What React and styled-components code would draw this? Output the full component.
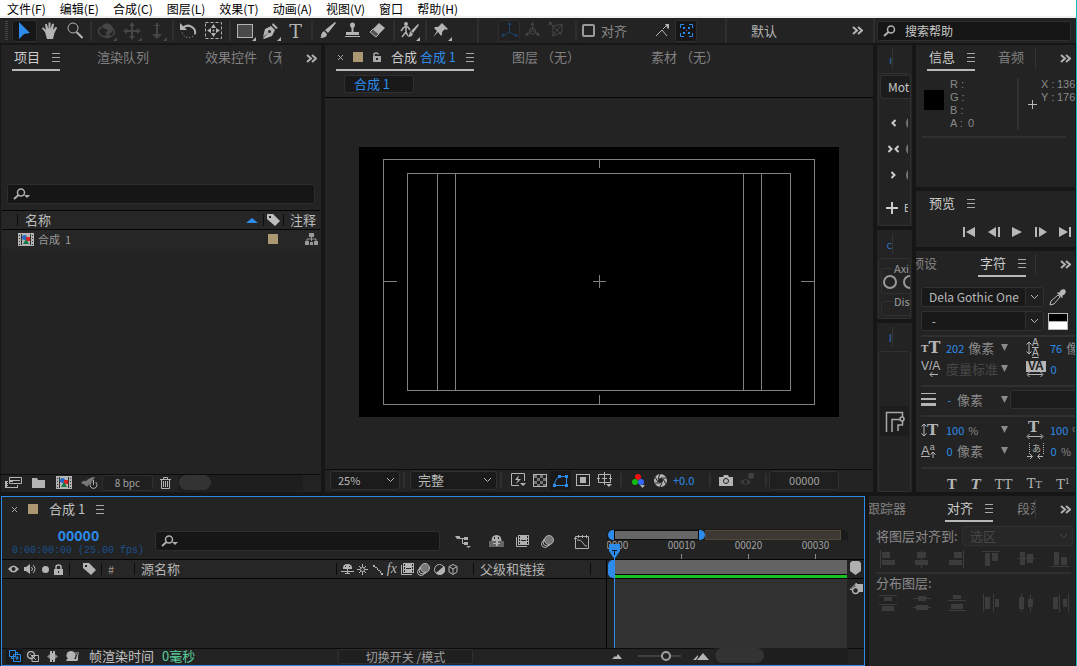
import React, { useState } from 'react'
import styled, { createGlobalStyle, css } from 'styled-components'

const GlobalStyle = createGlobalStyle`
  * {
    box-sizing: border-box;
  }
  body {
    margin: 0;
    background: #161616;
    font-family: "Noto Sans CJK SC", "Noto Sans", sans-serif;
    font-size: 13px;
    line-height: 16px;
    color: #9a9a9a;
  }
  button, input, select {
    font: inherit;
    color: inherit;
    margin: 0;
    padding: 0;
    border: 0;
    background: none;
    outline: none;
  }
  svg {
    display: block;
    flex: none;
  }
`

/* ---------- icons ---------- */

const Icon = ({ w = 16, h = 16, children }) => (
  <svg width={w} height={h} viewBox={`0 0 ${w} ${h}`} fill="currentColor" aria-hidden="true">
    {children}
  </svg>
)

const line = { fill: 'none', stroke: 'currentColor', strokeWidth: 1 }
const line2 = { fill: 'none', stroke: 'currentColor', strokeWidth: 2 }

const Corner = () => <path d="M20 16v4h-4z" />

const ArrowIcon = () => <Icon w={11} h={17}><path d="M0 0l11 11-6 1-5 5z" /></Icon>
const HandIcon = () => (
  <Icon w={17} h={17}>
    <path d="M4 10L1 6.500q0-1.500 1.500-1L5 8 4 2.500Q5 1 6 2.500L7.500 7V1Q8.500-.500 9.500 1v6l1.500-5q1.500-1 2 .500L12 8l2.500-3q1.500-.500 1.500 1L13.500 11 12 17H6z" />
  </Icon>
)
const ZoomIcon = () => (
  <Icon w={16} h={17}><circle cx="6" cy="6" r="5" {...line} /><path d="M9.500 10l6 6" {...line2} /></Icon>
)
const OrbitIcon = () => (
  <Icon w={20} h={20}>
    <path d="M5 5q4-5 9-1 4 4 0 8-3 2-6 0l3-3-5-2z" />
    <path d="M5 6q-5 2-3 6t8 4M15 7q4 4 1 7t-7 2" {...line} strokeWidth="1.500" />
    <path d="M8 14l5-1-1 5z" />
    <Corner />
  </Icon>
)
const MoveIcon = () => (
  <Icon w={20} h={20}>
    <path d="M9 4h2v5h5v2h-5v5H9v-5H4V9h5z" />
    <path d="M10 1l3 4H7zM10 19l3-4H7zM1 10l4-3v6zM19 10l-4-3v6z" />
    <Corner />
  </Icon>
)
const DollyIcon = () => (
  <Icon w={20} h={20}><path d="M9 2h2v11h4l-5 5-5-5h4z" /><path d="M7 4h6v1H7z" /><Corner /></Icon>
)
const RotateIcon = () => (
  <Icon w={17} h={17}>
    <path d="M3 6a7 7 0 0 1 12 6" fill="none" stroke="currentColor" strokeWidth="2" />
    <path d="M0 1v7h7z" />
    <path d="M15 12a7 7 0 0 1-13-2" {...line} strokeDasharray="1 2" />
  </Icon>
)
const AnchorIcon = () => (
  <Icon w={17} h={17}>
    <rect x=".500" y=".500" width="16" height="16" {...line} strokeDasharray="3 2" />
    <path d="M8.500 2l2.500 4H6zM8.500 15l2.500-4H6zM2 8.500L6 6v5zM15 8.500L11 6v5z" />
    <circle cx="8.500" cy="8.500" r="1" />
  </Icon>
)
const RectIcon = () => (
  <Icon w={20} h={20}>
    <rect x="1.500" y="3.500" width="15" height="13" fill="#4a4a4a" stroke="currentColor" /><Corner />
  </Icon>
)
const PenIcon = () => (
  <Icon w={20} h={20}>
    <path d="M12 2l5 5-2 1-4-4zM10 5l4 4-3 6-8 3-1-1 5-5 1-1-6 5 2-8z" />
    <circle cx="8.500" cy="10.500" r="1.500" fill="#232323" /><Corner />
  </Icon>
)
const BrushIcon = () => (
  <Icon w={17} h={17}><path d="M16 0l1 1-8 10-3-3zM5 9l3 3q0 4-7 4 2-1 1-3 1-3 3-4z" /></Icon>
)
const StampIcon = () => (
  <Icon w={17} h={17}>
    <path d="M6 3a2.500 2.500 0 0 1 5 0q0 2-1.500 3v4H15v3H2v-3h5.500V6Q6 5 6 3zM1 14h15v1H1z" />
  </Icon>
)
const EraserIcon = () => (
  <Icon w={17} h={17}>
    <path d="M10 1l6 5-9 9-6-5z" /><path d="M1 10l6 5 3-3-6-5z" fill="#555" stroke="currentColor" />
  </Icon>
)
const RotoIcon = () => (
  <Icon w={20} h={20}>
    <circle cx="6" cy="3" r="2" />
    <path d="M4 6h4l2 3M6 5v6l-4 5M6 11l2 4M4 6L1 10" fill="none" stroke="currentColor" strokeWidth="1.500" />
    <path d="M18 3l1 1-6 8-2-2zM10 10l3 3q-1 3-5 3 2-3 2-6z" /><Corner />
  </Icon>
)
const PinIcon = () => (
  <Icon w={20} h={20}>
    <path d="M10 2l6 6-2 1-1-1-3 3q1 2-1 4L6 11l-5 5 4-6-3-3q2-2 4-1l3-3z" /><Corner />
  </Icon>
)
const AxesIcon = () => (
  <Icon w={17} h={17}>
    <path d="M8.500 1v9L2 14M8.500 10l6.500 4" {...line} /><path d="M8.500 0l2 3h-4zM0 15l2-4 2 3zM17 15l-2-4-2 3z" />
  </Icon>
)
const WorldAxesIcon = () => (
  <Icon w={17} h={17}>
    <circle cx="8.500" cy="9" r="3" {...line} />
    <path d="M8.500 1v7L2 13M8.500 8l6.500 5" {...line} /><path d="M8.500 0l2 3h-4zM1 14l2-4 2 3zM16 14l-2-4-2 3z" />
  </Icon>
)
const ViewAxesIcon = () => (
  <Icon w={17} h={17}>
    <path d="M4 4l9-2v8l-9 4zM1 1l12 12M13 2L3 14" {...line} /><path d="M0 0h4L0 4z" />
  </Icon>
)
const SnapIcon = () => (
  <Icon w={15} h={15}>
    <path d="M1 13l6-6 5 6M8 6l3-3" fill="none" stroke="currentColor" strokeWidth="1" />
    <path d="M10 1h4v4l-1 1z" />
  </Icon>
)
const SnapBoxIcon = () => (
  <Icon w={13} h={13}>
    <path d="M.500 4V.500H4M9 .500h3.500V4M12.500 9v3.500H9M4 12.500H.500V9" {...line} />
    <path d="M3 3h2v2H3zM8 3h2v2H8zM3 8h2v2H3zM8 8h2v2H8zM6 6h1v1H6z" />
  </Icon>
)
const SearchIcon = ({ arrow }) => (
  <Icon w={arrow ? 18 : 14} h={12}>
    <circle cx="8" cy="4.500" r="3.500" {...line} strokeWidth="1.500" />
    <path d="M5.500 7L1 11" {...line} strokeWidth="2" />
    {arrow && <path d="M11 7h6l-3 3z" />}
  </Icon>
)
const MoreIcon = () => (
  <Icon w={11} h={9}><path d="M1 1l4 3.500L1 8M6 1l4 3.500L6 8" fill="none" stroke="currentColor" strokeWidth="2" /></Icon>
)
const MenuIcon = () => <Icon w={8} h={9}><path d="M0 .500h8M0 4.500h8M0 8.500h8" {...line} /></Icon>
const CloseIcon = () => <Icon w={5} h={5}><path d="M0 0l5 5M5 0L0 5" {...line} /></Icon>
const OpenLockIcon = () => (
  <Icon w={8} h={10}><path d="M1 5V2.500Q1 1 3 1t2 1.500" {...line} strokeWidth="1.500" /><path d="M0 4h8v6H0z" /><path d="M3 6h2v2H3z" fill="#232323" /></Icon>
)
const LockIcon = () => (
  <Icon w={9} h={11}><path d="M2 5V3q0-2 2.500-2T7 3v2" {...line} strokeWidth="1.500" /><path d="M0 5h9v6H0z" /><path d="M4 7h1v2H4z" fill="#232323" /></Icon>
)
const TagIcon = () => (
  <Icon w={13} h={12}><path d="M0 0h6l7 7-5 5-8-7z" /><path d="M2 2h2v2H2z" fill="#232323" /></Icon>
)
const FilmIcon = () => (
  <Icon w={16} h={13}>
    <path d="M0 0h16v13H0z" fill="#b4b4b4" />
    <path d="M1 2h1v1H1zM1 5h1v1H1zM1 8h1v1H1zM1 11h1v1H1zM14 2h1v1h-1zM14 5h1v1h-1zM14 8h1v1h-1zM14 11h1v1h-1zM3 1h1v11H3zM12 1h1v11h-1z" fill="#333" />
    <path d="M4 2h8v9H4z" fill="#b4b4b4" />
    <circle cx="6.500" cy="4.500" r="2.500" fill="#2568c4" /><path d="M8 4h4v4H8z" fill="#d22" /><path d="M8 6l3 5H5z" fill="#174" />
  </Icon>
)
const TreeIcon = () => (
  <Icon w={13} h={12}>
    <path d="M4 0h5v4H4zM0 8h4v4H0zM9 8h4v4H9zM5 9h3v3H5z" /><path d="M6.500 4v4M2 8V6h9v2" {...line} />
  </Icon>
)
const FootageIcon = () => (
  <Icon w={17} h={11}>
    <path d="M4.500.500h12v6h-12zM6 3.500h9" {...line} /><path d="M5 3h3v2H5zM0 4h3v1H2v1h1v1H2v1h1v1H2v1h10V8h1v3H0z" />
  </Icon>
)
const FolderIcon = () => <Icon w={13} h={10}><path d="M0 0h5l1 2h7v8H0z" /></Icon>
const RocketIcon = () => (
  <Icon w={17} h={12}>
    <path d="M0 6q2-3 5-2 4-4 9-4-2 4-5 6l-3 4-2-2z" fill="#777" />
    <path d="M10.500 5a3.500 3.500 0 1 0 4 0M12.500 3v5" {...line} />
  </Icon>
)
const TrashIcon = () => (
  <Icon w={11} h={12}><path d="M0 2.500h11M3.500 2V.500h4V2M1.500 3v8.500h8V3M3.500 4v6M5.500 4v6M7.500 4v6" {...line} /></Icon>
)
const ChevronIcon = () => <Icon w={9} h={6}><path d="M1 1l3.500 3.500L8 1" {...line} /></Icon>
const FastPreviewIcon = () => (
  <Icon><path d="M1.500 1.500h13V9M1.500 1.500v12H9" {...line} /><path d="M9 3L5 8h3l-2 4 5-5H8zM10 11h6l-3 3z" /></Icon>
)
const CheckerIcon = () => (
  <Icon w={14} h={13}>
    <rect x=".500" y=".500" width="13" height="12" {...line} />
    <path d="M1 1h3v3H1zM7 1h3v3H7zM4 4h3v3H4zM10 4h3v3h-3zM1 7h3v3H1zM7 7h3v3H7zM4 10h3v2H4zM10 10h3v2h-3z" fill="#777" />
  </Icon>
)
const MaskIcon = () => (
  <Icon w={15} h={13}><path d="M1.500 11.500q0-6 5-9h7v9z" {...line} /><path d="M0 10h3v3H0zM5 1h3v3H5zM12 1h3v3h-3zM12 10h3v3h-3z" /></Icon>
)
const RoiIcon = () => (
  <Icon w={14} h={12}><rect x=".500" y=".500" width="13" height="11" {...line} /><path d="M4 3h6v6H4z" /></Icon>
)
const GridIcon = () => (
  <Icon><path d="M1.500 2.500h12v8h-12zM7.500 0v13M0 6.500h3M12 6.500h3M5 6.500h5" {...line} /><path d="M9 12h6l-3 3z" /></Icon>
)
const RgbIcon = () => (
  <Icon>
    <circle cx="7" cy="5" r="3" fill="#e11" /><circle cx="4" cy="10" r="3" fill="#1b1" /><circle cx="10" cy="10" r="3" fill="#36f" />
    <path d="M9 13h5l-2.500 3z" />
  </Icon>
)
const ApertureIcon = () => (
  <Icon w={13} h={13}>
    <circle cx="6.500" cy="6.500" r="4.500" fill="none" stroke="currentColor" strokeWidth="4" />
    <path d="M6 0L4 5M12 4L7 4M12 10L9 5M6 13l2-4M1 9h5M1 3l3 5" stroke="#232323" />
  </Icon>
)
const CameraIcon = () => (
  <Icon w={14} h={11}><path d="M0 2h4l1-2h4l1 2h4v9H0z" /><circle cx="7" cy="6" r="2.500" fill="none" stroke="#232323" /></Icon>
)
const GhostCameraIcon = () => (
  <Icon><circle cx="11" cy="4" r="3" /><path d="M9 1h5v3h-5z" /><path d="M0 10q5-6 11 0-5 6-11 0z" /><circle cx="5.500" cy="10" r="2" fill="#232323" /></Icon>
)
const FlowIcon = () => (
  <Icon w={17} h={14}><path d="M0 2h5v3H2zM9 3h4v3H9zM9 8h4v3H9z" /><path d="M4 4.500h5M7.500 4v5.500H9" {...line} /><path d="M11 12h5l-2.500 2z" /></Icon>
)
const ShyIcon = () => (
  <Icon w={15} h={12}>
    <path d="M0 6h15v6H0z" fill="#666" /><path d="M2.500 6q0-6 5-6t5 6H9v2h2v1H9v2H7V9H4V8h3V6z" />
    <path d="M5 2h1v2H5zM9 2h1v2H9z" fill="#232323" />
  </Icon>
)
const FrameBlendIcon = () => (
  <Icon w={13} h={12}>
    <path d="M.500 2v9.500H11" {...line} /><path d="M2 0h11v10H2z" />
    <path d="M3 1h1v2H3zM3 4h1v2H3zM3 7h1v2H3zM11 1h1v2h-1zM11 4h1v2h-1zM11 7h1v2h-1zM5 5h5v1H5z" fill="#232323" />
  </Icon>
)
const MotionBlurIcon = () => (
  <Icon w={13} h={13}>
    <circle cx="4" cy="9" r="3.500" {...line} /><circle cx="6" cy="7" r="4" {...line} />
    <circle cx="8" cy="5" r="4.500" fill="#777" stroke="currentColor" />
  </Icon>
)
const GraphIcon = () => (
  <Icon w={16} h={15}><path d="M1.500 2.500h13v12h-13zM0 4.500h3M4.500 1v3M8.500 1v3M12.500 1v3M3 6q4-1 6 3t4 3" {...line} /></Icon>
)
const EyeIcon = () => (
  <Icon w={11} h={8}><path d="M0 4q5.500-7 11 0-5.500 7-11 0z" /><circle cx="5.500" cy="4" r="2" fill="#232323" /></Icon>
)
const SpeakerIcon = () => (
  <Icon w={12} h={10}><path d="M0 3h2l4-3v10L2 7H0z" /><path d="M7.500 3q2 2 0 4M9 1q4 4 0 8" {...line} /></Icon>
)
const DotIcon = () => <Icon w={7} h={7}><circle cx="3.500" cy="3.500" r="3.500" /></Icon>
const ShySwitchIcon = () => (
  <Icon w={13} h={11}><path d="M2 4q0-4 4.500-4T11 4v1H2z" /><path d="M0 7.500h13M6.500 4v6M4 9.500h5" {...line} /><path d="M4 2h1v1H4zM8 2h1v1H8z" fill="#232323" /></Icon>
)
const SunIcon = () => (
  <Icon w={11} h={11}><circle cx="5.500" cy="5.500" r="2" {...line} /><path d="M5.500 0v3M5.500 8v3M0 5.500h3M8 5.500h3M2 2l2 2M7 7l2 2M9 2L7 4M4 7L2 9" {...line} /></Icon>
)
const QualityIcon = () => <Icon w={11} h={11}><path d="M1 1h2v2H1zM3 3h2v1H3zM5 4h1v2H5zM6 6h2v1H6zM8 7h1v2H8zM9 9h2v2H9z" /></Icon>
const HalfIcon = () => (
  <Icon w={11} h={11}><circle cx="5.500" cy="5.500" r="5" {...line} /><path d="M10 2A5 5 0 1 1 2 9z" /></Icon>
)
const CubeIcon = () => (
  <Icon w={10} h={11}><path d="M5 .500l4 2v5.500l-4 2.500L1 8V2.500zM1 2.500l4 2.500 4-2.500M5 5v5" {...line} /></Icon>
)
const LayersIcon = () => (
  <Icon w={12} h={12}><path d="M.500.500h6v6h-6zM2.500 6.500v2h2M6.500 2.500h2v2M4.500 4.500h7v7h-7zM8 6v4M6 8h4" {...line} /></Icon>
)
const OverlapIcon = () => (
  <Icon w={12} h={11}><circle cx="4" cy="4" r="3.500" {...line} strokeWidth="1.500" /><path d="M5 4.500h6.500v6H5zM3 3l6 6" {...line} /></Icon>
)
const FrameIcon = () => (
  <Icon w={11} h={11}><path d="M3 0h2v2h1V0h2v11H6V9H5v2H3z" /><path d="M3 3v5L0 5.500zM8 3v5l3-2.500z" fill="#888" /></Icon>
)
const SnailIcon = () => (
  <Icon w={13} h={10}><circle cx="5" cy="4.500" r="4.500" /><path d="M1 8h9l1-4h1v5l-1 1H0z" /><path d="M10 1v3M12 1v3" {...line} /></Icon>
)
const SmallHillIcon = () => <Icon w={10} h={5}><path d="M0 5l3-3 1 1 2-3 4 5z" /></Icon>
const BigHillIcon = () => <Icon w={16} h={7}><path d="M0 7l5-5v2L3 7zM4 7l6-7 6 7z" /></Icon>
const ShieldIcon = () => <Icon w={11} h={14}><path d="M0 2l2-2h7l2 2v8l-5.500 4L0 10z" /></Icon>
const CompButtonIcon = () => (
  <Icon w={14} h={13}><path d="M7 2h7v8H7z" /><path d="M1 7.500h4L7.500 1v5" {...line} /><path d="M1 7.500L7.500 1" {...line} /><circle cx="6.500" cy="8.500" r="3" fill="#232323" stroke="currentColor" strokeWidth="1.500" /></Icon>
)
const PlayheadIcon = () => (
  <Icon w={13} h={15}><path d="M1 0h11v7l-5.500 8L1 7z" /><path d="M4 6h5v1H7v4H6V7H4z" fill="#111" /></Icon>
)
const DropperIcon = () => (
  <Icon w={17} h={17}><path d="M12 1l3-1 2 2-1 3-3 2 1 1-1 1-5-5 1-1 1 1z" /><path d="M9 6l2 2-6 7-4 1 1-4z" {...line} /></Icon>
)
const PlusIcon = ({ size = 11, weight = 1 }) => (
  <Icon w={size} h={size}><path d={`M0 ${size / 2}h${size}M${size / 2} 0v${size}`} stroke="currentColor" strokeWidth={weight} /></Icon>
)
const EaseLeft = () => <Icon w={5} h={8}><path d="M4.500 1L1.500 4l3 3" {...line2} /></Icon>
const EaseRight = () => <Icon w={5} h={8}><path d="M.500 1l3 3-3 3" {...line2} /></Icon>
const PathIcon = () => (
  <Icon w={20} h={21}><path d="M1.500 21V1.500h16V6M7 21V8.500h9M13 20v-6h4.500V9" {...line} strokeWidth="1.500" /><circle cx="17" cy="8" r="2" fill="#232323" stroke="currentColor" strokeWidth="1.500" /></Icon>
)

const TransportIcons = {
  first: <Icon w={12} h={10}><path d="M0 0h2v10H0zM12 0v10L3 5z" /></Icon>,
  back: <Icon w={12} h={10}><path d="M8 0v10L0 5zM10 0h2v10h-2z" /></Icon>,
  play: <Icon w={10} h={10}><path d="M0 0l10 5-10 5z" /></Icon>,
  next: <Icon w={12} h={10}><path d="M0 0h2v10H0zM4 0l8 5-8 5z" /></Icon>,
  last: <Icon w={12} h={10}><path d="M0 0l9 5-9 5zM10 0h2v10h-2z" /></Icon>,
}

/* rect shapes and guide lines of the align panel */
const alignIcons = [
  ['左对齐', 'M1 0h1v18H1zM3 2h8v6H3zM3 10h13v5H3z'],
  ['水平居中', 'M8 0h1v18H8zM4 2h9v6H4zM2 10h13v5H2z'],
  ['右对齐', 'M15 0h1v18h-1zM6 2h8v6H6zM1 10h13v5H1z'],
  ['顶对齐', 'M0 1h18v1H0zM3 3h5v13H3zM10 3h6v8h-6z'],
  ['垂直居中', 'M0 8h18v1H0zM3 2h5v13H3zM10 4h6v9h-6z'],
  ['底对齐', 'M0 16h18v1H0zM3 2h5v13H3zM10 7h6v8h-6z'],
]
const distributeIcons = [
  ['按顶分布', 'M0 1h18v1H0zM5 3h8v4H5zM0 10h18v1H0zM3 12h12v5H3z'],
  ['垂直均匀分布', 'M0 4h18v1H0zM5 2h8v5H5zM0 13h18v1H0zM3 11h12v5H3z'],
  ['按底分布', 'M5 1h8v4H5zM0 6h18v1H0zM3 10h12v5H3zM0 16h18v1H0z'],
  ['按左分布', 'M1 0h1v18H1zM3 3h5v12H3zM11 0h1v18h-1zM13 5h4v8h-4z'],
  ['水平均匀分布', 'M4 0h1v18H4zM2 3h5v12H2zM13 0h1v18h-1zM11 5h5v8h-5z'],
  ['按右分布', 'M2 3h5v12H2zM8 0h1v18H8zM12 5h4v8h-4zM17 0h1v18h-1z'],
]

/* ---------- shared parts ---------- */

const Window = styled.div`
  display: flex;
  flex-direction: column;
  min-height: 100vh;
  border-right: 1px solid #17b9b9;
  background: #161616;
  overflow: hidden;
`

const MenuBar = styled.nav`
  display: flex;
  gap: 14px;
  height: 18px;
  padding-left: 7px;
  background: #fff;
  border-bottom: 2px solid #f0f0f0;
  color: #000;
  font-size: 12px;
  line-height: 15px;
  button {
    white-space: nowrap;
  }
`

const Toolbar = styled.div`
  display: flex;
  align-items: center;
  height: 25px;
  margin-bottom: 2px;
  padding: 0 5px;
  background: #232323;
  color: #b4b4b4;
`

const Grip = styled.div`
  width: 3px;
  height: 19px;
  margin-right: 4px;
  background: repeating-linear-gradient(#444 0 1px, #232323 1px 2px);
`

const ToolButton = styled.button`
  display: flex;
  align-items: center;
  justify-content: center;
  flex: none;
  width: ${({ $w }) => $w || 25}px;
  height: 22px;
  border-radius: 3px;
  ${({ $on }) => $on && css`
    background: #161616;
    border: 1px solid #2e2e2e;
    color: #2d8ceb;
  `}
  ${({ $dim }) => $dim && css`
    color: #464646;
  `}
  ${({ $on, $dim }) => $on && $dim && css`
    background: #202020;
    color: #1c426b;
  `}
`

const TypeGlyph = styled.span`
  font-family: "DejaVu Serif", serif;
  font-size: ${({ $size }) => $size || 13}px;
  font-weight: ${({ $bold }) => ($bold ? 700 : 400)};
  font-style: ${({ $italic }) => ($italic ? 'italic' : 'normal')};
  line-height: 16px;
  small {
    font-size: 10px;
  }
  sup {
    font-size: 8px;
    line-height: 0;
  }
`

const Divider = styled.span`
  flex: none;
  width: 2px;
  height: ${({ $h }) => $h || 20}px;
  margin: 0 2px 0 3px;
  background: #2f2f2f;
`

const Spacer = styled.div`
  flex: ${({ $w }) => ($w ? `0 0 ${$w}px` : '1')};
`

const CheckLabel = styled.label`
  display: flex;
  align-items: center;
  gap: 6px;
  margin-left: 3px;
  color: #8a8a8a;
  input {
    appearance: none;
    width: 13px;
    height: 13px;
    border: 2px solid #9a9a9a;
    border-radius: 2px;
  }
`

const SearchBox = styled.label`
  display: flex;
  align-items: center;
  gap: 8px;
  flex: ${({ $w }) => ($w ? `0 0 ${$w}px` : '1')};
  height: 20px;
  padding-left: 5px;
  border: 1px solid #2e2e2e;
  border-radius: 3px;
  background: #161616;
  color: #b0b0b0;
  font-size: 12px;
  input {
    flex: 1;
    min-width: 0;
  }
  input::placeholder {
    color: #c8c8c8;
    opacity: 1;
  }
`

const Panel = styled.section`
  display: flex;
  flex-direction: column;
  flex: ${({ $flex }) => $flex || 'none'};
  min-width: 0;
  min-height: ${({ $h }) => ($h ? `${$h}px` : 'auto')};
  background: #232323;
  overflow: hidden;
`

const TabBar = styled.div`
  display: flex;
  flex: none;
  align-items: stretch;
  height: 26px;
  padding-left: ${({ $pad }) => $pad ?? 11}px;
`

const TabClip = styled.div`
  display: flex;
  flex: 1;
  min-width: 0;
  overflow: hidden;
`

const Tab = styled.button`
  display: flex;
  align-items: center;
  flex: none;
  gap: ${({ $gap }) => $gap || 12}px;
  height: 26px;
  margin-left: ${({ $before }) => $before || 0}px;
  padding: 0 0 0 2px;
  border-bottom: 2px solid ${({ $active }) => ($active ? '#b9b9b9' : 'transparent')};
  color: ${({ $active, $bright }) => ($active || $bright ? '#cdcdcd' : '#808080')};
  white-space: nowrap;
  svg {
    color: #a8a8a8;
  }
`

const TabEnd = styled.div`
  display: flex;
  align-items: center;
  gap: 24px;
  width: 40px;
  color: #b0b0b0;
  &::before {
    content: '';
    width: 1px;
    height: 20px;
    background: #343434;
  }
`

const Blue = styled.span`
  color: #2d8ceb;
`

const Swatch = styled.span`
  flex: none;
  width: 10px;
  height: 10px;
  background: #ab9873;
`

const SelectWrap = styled.div`
  display: grid;
  flex: none;
  align-items: center;
  width: ${({ $w }) => $w}px;
  height: ${({ $h }) => $h || 20}px;
  border: 1px solid #303030;
  border-radius: 3px;
  background: ${({ $bg }) => $bg || '#1b1b1b'};
  color: ${({ $dim }) => ($dim ? '#484848' : '#b8b8b8')};
  select, svg {
    grid-area: 1 / 1;
  }
  select {
    appearance: none;
    width: 100%;
    height: 100%;
    padding-left: 7px;
    opacity: 1;
    font-size: ${({ $size }) => $size || 12}px;
  }
  svg {
    justify-self: end;
    margin-right: 4px;
    pointer-events: none;
  }
`

const Select = ({ label, value, ...rest }) => (
  <SelectWrap {...rest}>
    <select aria-label={label} disabled={rest.$dim} defaultValue={value}>
      <option>{value}</option>
    </select>
    <ChevronIcon />
  </SelectWrap>
)

const Workspace = styled.main`
  display: flex;
  flex: 1;
  gap: 4px;
  padding: 0 1px;
`

const BottomRow = styled.div`
  display: flex;
  gap: 4px;
  min-height: 170px;
  margin-top: 4px;
  padding: 0 1px;
`

const Column = styled.div`
  display: flex;
  flex-direction: column;
  flex: 0 0 ${({ $w }) => $w}px;
  gap: 4px;
  min-width: 0;
`

/* ---------- project ---------- */

const ProjectSearch = styled.div`
  display: flex;
  margin: 113px 6px 6px 6px;
`

const ItemTable = styled.table`
  width: calc(100% - 2px);
  margin-left: 1px;
  border-collapse: collapse;
  table-layout: fixed;
  th, td {
    height: 19px;
    padding: 0;
    font-weight: 400;
    text-align: left;
  }
  thead tr {
    border-top: 1px solid #050505;
    border-bottom: 1px solid #050505;
    background: #262626;
    color: #bdbdbd;
  }
  tbody tr {
    background: #262626;
    color: #9a9a9a;
    font-size: 11px;
  }
`

const CellFlex = styled.div`
  display: flex;
  align-items: center;
  gap: 4px;
  height: 12px;
  padding-left: ${({ $pad }) => $pad || 0}px;
  border-left: ${({ $line }) => ($line ? '1px solid #0c0c0c' : '0')};
  white-space: nowrap;
`

const SortMark = styled.span`
  margin-left: auto;
  margin-right: 5px;
  border: 6px solid transparent;
  border-top: 0;
  border-bottom: 5px solid #2d8ceb;
`

const PanelFooter = styled.div`
  display: flex;
  align-items: center;
  height: ${({ $h }) => $h || 18}px;
  margin-top: auto;
  padding-bottom: 2px;
  border-top: 1px solid #0c0c0c;
  color: #b4b4b4;
`

const IconButton = styled.button`
  display: flex;
  align-items: center;
  justify-content: center;
  flex: none;
  width: ${({ $w }) => $w || 25}px;
  height: ${({ $h }) => $h || 16}px;
  color: ${({ $on, $dim }) => ($on ? '#2d8ceb' : $dim ? '#3e3e3e' : 'inherit')};
  background: ${({ $on }) => ($on ? '#191919' : 'none')};
`

const BoxButton = styled.button`
  flex: none;
  width: ${({ $w }) => $w}px;
  height: ${({ $h }) => $h || 16}px;
  border: 1px solid #303030;
  border-radius: 3px;
  background: #1f1f1f;
  color: #a0a0a0;
  font-size: ${({ $size }) => $size || 11}px;
  line-height: 13px;
`

const ScrollTrack = styled.div`
  flex: 0 0 ${({ $w }) => $w}px;
  height: 16px;
  margin-left: ${({ $ml }) => $ml || 0}px;
  background: #1e1e1e;
  &::before {
    content: '';
    display: block;
    width: ${({ $thumb }) => $thumb}px;
    height: 15px;
    margin-left: 1px;
    border-radius: 8px;
    background: #333;
  }
`

const Project = () => (
  <Panel $flex="0 0 320px">
    <TabBar>
      <TabClip>
        <Tab $active>项目 <MenuIcon /></Tab>
        <Tab $before={35}>渲染队列</Tab>
        <Tab $before={54}>效果控件 （无）</Tab>
      </TabClip>
      <TabEnd><MoreIcon /></TabEnd>
    </TabBar>
    <ProjectSearch>
      <SearchBox><SearchIcon arrow /><input aria-label="搜索项目" /></SearchBox>
    </ProjectSearch>
    <ItemTable>
      <colgroup><col width="15" /><col /><col width="20" /><col width="37" /></colgroup>
      <thead>
        <tr>
          <th />
          <th><CellFlex $line $pad={7}>名称<SortMark /></CellFlex></th>
          <th><CellFlex $line $pad={3}><TagIcon /></CellFlex></th>
          <th><CellFlex $line $pad={6}>注释</CellFlex></th>
        </tr>
      </thead>
      <tbody>
        <tr>
          <td colSpan={2}><CellFlex $pad={16}><FilmIcon />合成&nbsp; 1</CellFlex></td>
          <td><CellFlex $pad={5}><Swatch /></CellFlex></td>
          <td><CellFlex $pad={22}><TreeIcon /></CellFlex></td>
        </tr>
      </tbody>
    </ItemTable>
    <PanelFooter>
      <IconButton><FootageIcon /></IconButton>
      <IconButton><FolderIcon /></IconButton>
      <IconButton><FilmIcon /></IconButton>
      <IconButton $w={26}><RocketIcon /></IconButton>
      <BoxButton $w={51} $size={10}>8 bpc</BoxButton>
      <IconButton $w={24}><TrashIcon /></IconButton>
      <ScrollTrack $w={125} $thumb={32} $ml={1} />
    </PanelFooter>
  </Panel>
)

/* ---------- composition ---------- */

const Crumbs = styled.div`
  display: flex;
  align-items: center;
  height: 27px;
  padding: 0 0 0 19px;
  border-bottom: 1px solid #050505;
  color: #2d8ceb;
  button {
    width: 70px;
    height: 18px;
    padding-right: 14px;
    border: 1px solid #303030;
    border-radius: 3px;
    background: #191919;
    line-height: 14px;
  }
`

const Viewer = styled.div`
  display: flex;
  flex: 1;
  align-items: center;
  justify-content: center;
  padding-bottom: 3px;
`

const Canvas = styled.div`
  width: 480px;
  max-width: 100%;
  aspect-ratio: 16 / 9;
  background: #000;
  color: #808080;
  svg {
    width: 100%;
    height: 100%;
  }
`

const ExposureValue = styled.button`
  padding: 0 3px 0 4px;
  color: #2d8ceb;
  font-size: 11px;
`

const Composition = () => (
  <Panel $flex="1">
    <TabBar>
      <Tab $active $gap={10}>
        <CloseIcon /><Swatch /><OpenLockIcon />
        <span>合成 <Blue>合成 1</Blue></span><MenuIcon />
      </Tab>
      <Tab $before={36}>图层 （无）</Tab>
      <Tab $before={69}>素材 （无）</Tab>
    </TabBar>
    <Crumbs><button>合成 1</button></Crumbs>
    <Viewer>
      <Canvas>
        <svg viewBox="0 0 480 270" fill="none" stroke="currentColor">
          <rect x="24.500" y="12.500" width="431" height="245" />
          <rect x="48.500" y="26.500" width="383" height="217" />
          <path d="M78.500 26v218M96.500 26v218M384.500 26v218M402.500 26v218" />
          <path d="M240.500 12v9M240.500 248v9M25 134.500h13M442 134.500h13M234 134.500h13M240.500 128v13" />
        </svg>
      </Canvas>
    </Viewer>
    <PanelFooter $h={23}>
      <Spacer $w={5} />
      <Select label="放大率" value="25%" $w={70} $h={19} $size={11} />
      <Divider $h={16} />
      <Spacer $w={3} />
      <Select label="分辨率" value="完整" $w={87} $h={19} $size={13} />
      <Divider $h={16} />
      <Spacer $w={2} />
      <IconButton $w={23} $h={19}><FastPreviewIcon /></IconButton>
      <IconButton $w={21} $h={19}><CheckerIcon /></IconButton>
      <IconButton $w={21} $h={19} $on><MaskIcon /></IconButton>
      <IconButton $w={23} $h={19}><RoiIcon /></IconButton>
      <IconButton $w={21} $h={19}><GridIcon /></IconButton>
      <Spacer $w={2} />
      <Divider $h={14} />
      <Spacer $w={3} />
      <IconButton $w={24} $h={19}><RgbIcon /></IconButton>
      <IconButton $w={18} $h={19}><ApertureIcon /></IconButton>
      <ExposureValue>+0.0</ExposureValue>
      <Spacer $w={9} />
      <Divider $h={14} />
      <Spacer $w={1} />
      <IconButton $w={23} $h={19}><CameraIcon /></IconButton>
      <IconButton $w={21} $h={19} $dim><GhostCameraIcon /></IconButton>
      <Spacer $w={4} />
      <Divider $h={14} />
      <BoxButton $w={70} $h={19}>00000</BoxButton>
    </PanelFooter>
  </Panel>
)

/* ---------- narrow script panels ---------- */

const ScriptTab = styled.div`
  display: flex;
  align-items: center;
  justify-content: flex-end;
  flex: none;
  width: 16px;
  height: 20px;
  margin: 4px 0;
  border-right: 1px solid #343434;
  color: #2d6fbf;
  font-size: 11px;
  overflow: hidden;
`

const ScriptBody = styled.div`
  display: flex;
  flex-direction: column;
  flex: 1;
  margin: 0 1px;
  padding: 1px 2px 0 1px;
  border: 1px solid #303030;
  border-radius: 3px;
  overflow: hidden;
`

const ScriptButton = styled.button`
  flex: none;
  width: 60px;
  height: 24px;
  margin-bottom: 11px;
  padding-left: 7px;
  border: 1px solid #303030;
  border-radius: 3px;
  background: #1c1c1c;
  color: #c4c4c4;
  font-size: 12px;
  text-align: left;
`

const EaseRow = styled.div`
  display: flex;
  align-items: center;
  justify-content: center;
  flex: none;
  height: 26px;
  color: #ccc;
  overflow: hidden;
  input {
    flex: none;
    appearance: none;
    width: 14px;
    height: 14px;
    margin-right: -12px;
    border: 2px solid #777;
    border-radius: 50%;
  }
  span {
    display: flex;
    flex: 1;
    justify-content: center;
    gap: 1px;
  }
  small {
    margin-right: -2px;
    font-size: 10px;
  }
`

const ScriptGroup = styled.fieldset`
  flex: none;
  width: 50px;
  min-width: 0;
  height: ${({ $h }) => $h}px;
  margin: 0 0 0 1px;
  padding: 0;
  border: 1px solid #303030;
  border-right: 0;
  border-radius: 3px;
  font-size: 11px;
  line-height: 14px;
  legend {
    margin-left: 10px;
    padding: 0 2px;
  }
  div {
    display: flex;
    gap: 6px;
    padding-left: 1px;
  }
  input {
    appearance: none;
    width: 14px;
    height: 14px;
    border: 2px solid #999;
    border-radius: 50%;
  }
`

const AnchorBox = styled.button`
  display: flex;
  align-items: center;
  justify-content: center;
  width: 29px;
  height: 30px;
  margin-top: 53px;
  background: #1d1d1d;
  color: #a8a8a8;
`

const Scripts = () => (
  <Column $w={35}>
    <Panel $h={181}>
      <ScriptTab>ı</ScriptTab>
      <ScriptBody>
        <ScriptButton>Motion</ScriptButton>
        <EaseRow><span><EaseLeft /></span><input type="radio" aria-label="缓入" /></EaseRow>
        <EaseRow><span><EaseRight /><EaseLeft /></span><input type="radio" aria-label="缓动" /></EaseRow>
        <EaseRow><span><EaseRight /></span><input type="radio" aria-label="缓出" /></EaseRow>
        <Spacer $w={7} />
        <EaseRow><span><PlusIcon size={12} weight={2} /></span><small>E</small></EaseRow>
      </ScriptBody>
    </Panel>
    <Panel $h={89}>
      <ScriptTab>c</ScriptTab>
      <ScriptBody>
        <Spacer $w={1} />
        <ScriptGroup $h={33}>
          <legend>Axis</legend>
          <div><input type="radio" name="axis" aria-label="X" /><input type="radio" name="axis" aria-label="Y" /></div>
        </ScriptGroup>
        <ScriptGroup $h={22}><legend>Distance</legend></ScriptGroup>
      </ScriptBody>
    </Panel>
    <Panel $flex="1">
      <ScriptTab>I</ScriptTab>
      <ScriptBody><AnchorBox aria-label="路径"><PathIcon /></AnchorBox></ScriptBody>
    </Panel>
  </Column>
)

/* ---------- info, preview, character ---------- */

const InfoBody = styled.div`
  display: grid;
  grid-template-columns: 20px 66px 27px 1fr;
  margin: 7px 9px 0 6px;
  padding: 0 0 6px 2px;
  border-bottom: 2px solid #303030;
  font-family: "Liberation Sans", sans-serif;
  font-size: 11px;
  line-height: 13px;
  color: #8a8a8a;
`

const ColorChip = styled.div`
  height: 20px;
  margin-top: 12px;
  background: #000;
`

const Channels = styled.dl`
  display: grid;
  grid-template-columns: ${({ $term }) => $term || 18}px 1fr;
  align-content: start;
  margin: 0;
  padding-left: ${({ $pad }) => $pad || 0}px;
  white-space: pre;
  dt, dd {
    margin: 0;
    min-height: 13px;
  }
`

const CrossCell = styled.div`
  display: flex;
  align-items: center;
  justify-content: flex-end;
  height: 52px;
  margin-left: 7px;
  border-left: 2px solid #303030;
  color: #b8b8b8;
`

const Transport = styled.div`
  display: flex;
  justify-content: space-between;
  padding: 10px 4px 0 47px;
  color: #b8b8b8;
`

const CharBody = styled.div`
  display: flex;
  flex-direction: column;
  padding: 10px 0 0 5px;
`

const FontPicker = styled.div`
  display: grid;
  grid-template-columns: 123px 1fr;
  gap: 4px;
  align-items: center;
  padding-bottom: 4px;
  color: #b8b8b8;
  svg {
    margin-left: 1px;
  }
`

const FontSelect = styled(SelectWrap)`
  background: linear-gradient(to left, #1f1f1f 17px, #303030 17px 18px, #191919 18px);
`

const FillStroke = styled.button`
  width: 20px;
  height: 17px;
  border: 1px solid #b8b8b8;
  background: linear-gradient(#000 0 7px, #aaa 7px 8px, #fff 8px);
`

const MetricGroup = styled.div`
  padding: ${({ $top }) => $top}px 0 ${({ $bottom }) => $bottom}px;
  border-top: 2px solid #303030;
`

const MetricRow = styled.div`
  display: grid;
  grid-template-columns: 25px 55px 25px 24px 1fr;
  align-items: center;
  height: 21px;
  white-space: nowrap;
  color: #b4b4b4;
`

const Metric = styled.div`
  display: flex;
  align-items: center;
  gap: 4px;
  color: ${({ $dim }) => ($dim ? '#484848' : '#8a8a8a')};
  button {
    min-width: 7px;
    color: #2d8ceb;
    font-size: 11px;
    line-height: 16px;
  }
`

const DownArrow = styled.span`
  width: 7px;
  height: 7px;
  background: #8a8a8a;
  clip-path: polygon(0 0, 100% 0, 50% 100%);
`

const StrokeStyle = styled.input`
  grid-column: span 2;
  width: 90px;
  height: 19px;
  margin-left: -16px;
  border: 1px solid #303030;
  border-radius: 3px;
  background: #1b1b1b;
`

const StyleButtons = styled.div`
  display: flex;
  align-items: center;
  justify-content: space-between;
  height: 25px;
  padding: 7px 5px 0 26px;
  border-top: 2px solid #303030;
  color: #b4b4b4;
`

const CharIcon = styled.span`
  display: flex;
  align-items: center;
  font-family: ${({ $serif }) => ($serif ? '"DejaVu Serif", serif' : '"Liberation Sans", sans-serif')};
  font-size: ${({ $size }) => $size || 12}px;
  font-weight: ${({ $serif }) => ($serif ? 700 : 400)};
  line-height: 14px;
  small {
    align-self: flex-end;
    font-size: 10px;
    line-height: 12px;
  }
`

const Stacked = styled(CharIcon)`
  flex-direction: column;
  align-items: flex-start;
  line-height: ${({ $lh }) => $lh || 11}px;
  b {
    padding: 0 2px;
    font-weight: inherit;
    ${({ $fill }) => $fill && css`
      background: #b4b4b4;
      color: #1b1b1b;
      font-weight: 700;
    `}
    ${({ $dots }) => $dots && css`
      margin-left: 3px;
      border: 1px dotted #b4b4b4;
      border-width: 0 1px;
      font-family: "Noto Sans CJK JP", sans-serif;
    `}
  }
`

const WideArrow = () => (
  <Icon w={18} h={5}><path d="M2 2.500h14M3.500 0L1 2.500 3.500 5M14.500 0L17 2.500 14.500 5" {...line} /></Icon>
)
const InwardArrows = () => (
  <Icon w={18} h={5}><path d="M1 2.500h5M4 0l2.500 2.500L4 5M17 2.500h-5M14 0l-2.500 2.500L14 5" {...line} /></Icon>
)
const TallArrow = () => (
  <Icon w={6} h={14}><path d="M3 1v12M.500 3.500L3 1l2.500 2.500M.500 10.500L3 13l2.500-2.500" {...line} /></Icon>
)
const LeftArrow = () => <Icon w={18} h={5}><path d="M9 2.500h8M11.500 0L9 2.500 11.500 5" {...line} /></Icon>
const ShiftArrow = () => <Icon w={6} h={7}><path d="M3 7V1M.500 3.500L3 1l2.500 2.500" {...line} /></Icon>
const LinesIcon = () => <Icon w={15} h={13}><path d="M0 0h15v1H0zM0 5h15v2H0zM0 10h15v3H0z" /></Icon>

const Info = () => (
  <Panel $h={142}>
    <TabBar>
      <TabClip>
        <Tab $active>信息 <MenuIcon /></Tab>
        <Tab $before={21}>音频</Tab>
      </TabClip>
      <TabEnd><MoreIcon /></TabEnd>
    </TabBar>
    <InfoBody>
      <ColorChip />
      <Channels $pad={6}>
        <dt>R :</dt><dd /><dt>G :</dt><dd /><dt>B :</dt><dd /><dt>A :</dt><dd>0</dd>
      </Channels>
      <CrossCell><PlusIcon size={9} /></CrossCell>
      <Channels $pad={4} $term={16}>
        <dt>X :</dt><dd>1360</dd><dt>Y :</dt><dd>1760</dd>
      </Channels>
    </InfoBody>
  </Panel>
)

const Preview = () => (
  <Panel $h={56}>
    <TabBar><Tab $bright>预览 <MenuIcon /></Tab></TabBar>
    <Transport>
      {Object.entries(TransportIcons).map(([name, icon]) => (
        <button key={name} aria-label={name}>{icon}</button>
      ))}
    </Transport>
  </Panel>
)

const Character = () => (
  <Panel $flex="1">
    <TabBar $pad={0}>
      <TabClip>
        <Tab $before={-7}>预设</Tab>
        <Tab $active $before={41}>字符 <MenuIcon /></Tab>
      </TabClip>
      <TabEnd><MoreIcon /></TabEnd>
    </TabBar>
    <CharBody>
      <FontPicker>
        <FontSelect $w={123}>
          <select aria-label="字体" defaultValue="Dela Gothic One"><option>Dela Gothic One</option></select>
          <ChevronIcon />
        </FontSelect>
        <DropperIcon />
        <FontSelect $w={123}>
          <select aria-label="字体样式"><option>&nbsp;-</option></select>
          <ChevronIcon />
        </FontSelect>
        <FillStroke aria-label="填充颜色" />
      </FontPicker>
      <MetricGroup $top={0} $bottom={6}>
        <MetricRow>
          <CharIcon $serif $size={16}><small>T</small>T</CharIcon>
          <Metric><button>202</button>像素</Metric><DownArrow />
          <CharIcon><TallArrow /><Stacked $size={10} $lh={10}><u>A</u><u>A</u></Stacked></CharIcon>
          <Metric><button>76</button>像素</Metric>
        </MetricRow>
        <MetricRow>
          <Stacked>V/A<LeftArrow /></Stacked>
          <Metric $dim>度量标准</Metric><DownArrow />
          <Stacked $fill><b>VA</b><WideArrow /></Stacked>
          <Metric><button>0</button></Metric>
        </MetricRow>
      </MetricGroup>
      <MetricGroup $top={2} $bottom={5}>
        <MetricRow>
          <LinesIcon />
          <Metric><button>-</button>像素</Metric><DownArrow />
          <StrokeStyle aria-label="描边样式" />
        </MetricRow>
      </MetricGroup>
      <MetricGroup $top={2} $bottom={6}>
        <MetricRow>
          <CharIcon $serif $size={15}><TallArrow />T</CharIcon>
          <Metric><button>100</button><small>%</small></Metric><DownArrow />
          <Stacked $serif $size={15} $lh={13}><b>T</b><WideArrow /></Stacked>
          <Metric><button>100</button><small>%</small></Metric>
        </MetricRow>
        <MetricRow>
          <CharIcon $size={13}><u>A</u><Stacked $size={9} $lh={8}>a<ShiftArrow /></Stacked></CharIcon>
          <Metric><button>0</button>像素</Metric><DownArrow />
          <Stacked $dots $size={9}><b>あ</b><InwardArrows /></Stacked>
          <Metric><button>0</button><small>%</small></Metric>
        </MetricRow>
      </MetricGroup>
      <StyleButtons>
        <button aria-label="仿粗体"><TypeGlyph $bold>T</TypeGlyph></button>
        <button aria-label="仿斜体"><TypeGlyph $italic $bold>T</TypeGlyph></button>
        <button aria-label="全部大写"><TypeGlyph>TT</TypeGlyph></button>
        <button aria-label="小型大写"><TypeGlyph>T<small>T</small></TypeGlyph></button>
        <button aria-label="上标"><TypeGlyph>T<sup>1</sup></TypeGlyph></button>
      </StyleButtons>
    </CharBody>
  </Panel>
)

/* ---------- timeline ---------- */

const TimelinePanel = styled.section`
  display: flex;
  flex: 1;
  min-width: 0;
  border: 1px solid #2d8ceb;
  background: #232323;
`

const TimelineLeft = styled.div`
  display: flex;
  flex-direction: column;
  flex: 605 1 0;
  min-width: 0;
`

const TimelineTop = styled.div`
  display: flex;
  flex-direction: column;
  flex: none;
  height: 62px;
`

const TimeRow = styled.div`
  display: flex;
  align-items: center;
  margin-top: 2px;
  height: 32px;
`

const TimeReadout = styled.button`
  width: 153px;
  padding-top: 3px;
  color: #2d8ceb;
  font-size: 14px;
  font-weight: 700;
  line-height: 15px;
  white-space: nowrap;
  small {
    display: block;
    padding-left: 10px;
    font-family: "Liberation Mono", monospace;
    font-size: 10px;
    font-weight: 400;
    color: #18508c;
    text-align: left;
  }
`

const TimelineTools = styled.div`
  display: flex;
  align-items: center;
  padding: 0 17px 0 15px;
  color: #b0b0b0;
`

const ToolGap = styled.span`
  width: ${({ $w }) => $w}px;
`

const LayerBody = styled.div`
  flex: 1;
  border-right: 1px solid #050505;
`

const LayerHeader = styled.div`
  display: flex;
  align-items: center;
  height: 20px;
  border-top: 1px solid #050505;
  border-bottom: 1px solid #050505;
  background: #262626;
  color: #b4b4b4;
`

const HeaderCell = styled.div`
  display: flex;
  align-items: center;
  flex: ${({ $w }) => ($w ? `0 0 ${$w}px` : '1')};
  height: 12px;
  padding: 0 ${({ $end }) => $end || 0}px 0 ${({ $start }) => $start || 6}px;
  border-right: 1px solid #0c0c0c;
  white-space: nowrap;
  ${({ $spread }) => $spread && css`
    justify-content: space-between;
  `}
`

const Hash = styled.span`
  font-size: 11px;
  color: #a09080;
`

const Fx = styled.i`
  width: 12px;
  font-family: "Liberation Serif", serif;
  font-size: 14px;
  line-height: 12px;
  text-align: center;
`

const TimelineName = styled.span`
  color: #c0c0c0;
`

const RenderTime = styled.span`
  margin-left: 7px;
  color: #c0c0c0;
  b {
    margin-left: 8px;
    color: #5ad0a0;
    font-weight: 400;
  }
`

const TimelineRight = styled.div`
  position: relative;
  display: flex;
  flex-direction: column;
  flex: 257 1 0;
  min-width: 0;
  overflow: hidden;
`

const Navigator = styled.div`
  display: flex;
  flex: none;
  height: 11px;
  margin: 32px 16px 0 0;
  padding: 1px 7px 0 1px;
  border-radius: 6px 6px 0 0;
  background: #1a1a1a;
`

const Handle = styled.span`
  flex: 0 0 6px;
  background: #2d8ceb;
  border-radius: ${({ $right }) => ($right ? '0 5px 5px 0' : '5px 0 0 5px')};
`

const NavRange = styled.span`
  flex: 0 0 85px;
  border: 1px solid #0a0a0a;
  background: #666;
`

const NavRest = styled.span`
  flex: 1;
  border: 1px solid #51483a;
  background: #3d3833;
`

const Ruler = styled.div`
  display: flex;
  flex: none;
  height: 19px;
  margin-left: -26px;
  font-size: 10px;
  line-height: 10px;
  color: #a0a0a0;
  span {
    flex: 0 0 67px;
    text-align: center;
  }
  span::after {
    content: '';
    display: block;
    width: 1px;
    height: 5px;
    margin: 4px auto 0;
    background: #8a8a8a;
  }
`

const TrackRow = styled.div`
  display: flex;
  flex: ${({ $h }) => ($h ? `0 0 ${$h}px` : '1')};
  border-top: 1px solid #050505;
`

const WorkArea = styled.div`
  display: flex;
  flex: 1;
  padding-left: 1px;
`

const WorkBar = styled.div`
  flex: 1;
  border-bottom: 3px solid #1abf26;
  background: linear-gradient(#636363 0 14px, #0a0a0a 14px);
`

const Tracks = styled.div`
  flex: 1;
  margin-left: 7px;
  background: #313131;
`

const Side = styled.div`
  display: flex;
  justify-content: center;
  flex: 0 0 17px;
  padding-top: ${({ $pad }) => $pad}px;
  color: #b0b0b0;
`

/* sits above the ruler and the tracks */
const Playhead = styled.div`
  position: absolute;
  top: 47px;
  bottom: 17px;
  left: 1px;
  width: 13px;
  color: #2d8ceb;
  background: linear-gradient(to right, transparent 6px, #2d8ceb 6px 7px, transparent 7px);
`

const ZoomSlider = styled.input`
  appearance: none;
  width: 43px;
  height: 11px;
  margin: 0 12px 0 16px;
  background: linear-gradient(transparent 4px, #404040 4px 6px, transparent 6px);
  &::-webkit-slider-thumb {
    appearance: none;
    width: 10px;
    height: 10px;
    border: 2px solid #a0a0a0;
    border-radius: 50%;
    background: #232323;
  }
`

const Timeline = () => {
  const [zoom, setZoom] = useState(70)

  return (
    <TimelinePanel>
      <TimelineLeft>
        <TimelineTop>
          <TabBar $pad={8}>
            <Tab $gap={11}>
              <CloseIcon /><Swatch /><TimelineName>合成 1</TimelineName><MenuIcon />
            </Tab>
          </TabBar>
          <TimeRow>
            <TimeReadout>00000<small>0:00:00:00 (25.00 fps)</small></TimeReadout>
            <SearchBox><SearchIcon arrow /><input aria-label="搜索图层" /></SearchBox>
            <TimelineTools>
              <FlowIcon />
              <ToolGap $w={17} />
              <ShyIcon />
              <ToolGap $w={12} />
              <FrameBlendIcon />
              <ToolGap $w={12} />
              <MotionBlurIcon />
              <ToolGap $w={20} />
              <GraphIcon />
            </TimelineTools>
          </TimeRow>
        </TimelineTop>
        <LayerBody>
          <LayerHeader>
            <HeaderCell $w={68} $end={6} $spread><EyeIcon /><SpeakerIcon /><DotIcon /><LockIcon /></HeaderCell>
            <HeaderCell $w={32} $start={13}><TagIcon /></HeaderCell>
            <HeaderCell $w={33}><Hash>#</Hash></HeaderCell>
            <HeaderCell>源名称</HeaderCell>
            <HeaderCell $w={137} $start={4} $end={15} $spread>
              <ShySwitchIcon /><SunIcon /><QualityIcon /><Fx>fx</Fx><FrameBlendIcon /><MotionBlurIcon /><HalfIcon /><CubeIcon />
            </HeaderCell>
            <HeaderCell $w={117}>父级和链接</HeaderCell>
            <Spacer $w={15} />
          </LayerHeader>
        </LayerBody>
        <PanelFooter $h={17}>
          <Spacer $w={4} />
          <IconButton $w={17} $on><LayersIcon /></IconButton>
          <IconButton $w={20}><OverlapIcon /></IconButton>
          <IconButton $w={19}><FrameIcon /></IconButton>
          <IconButton $w={20}><SnailIcon /></IconButton>
          <RenderTime>帧渲染时间<b>0毫秒</b></RenderTime>
          <Spacer />
          <BoxButton $w={135} $h={15} $size={12}>切换开关 /模式</BoxButton>
          <Spacer $w={134} />
        </PanelFooter>
      </TimelineLeft>
      <TimelineRight>
        <Navigator><Handle /><NavRange /><Handle $right /><NavRest /></Navigator>
        <Ruler><span>00000</span><span>00010</span><span>00020</span><span>00030</span></Ruler>
        <TrackRow $h={19}>
          <WorkArea><Handle /><WorkBar /></WorkArea>
          <Side $pad={1}><ShieldIcon /></Side>
        </TrackRow>
        <TrackRow>
          <Tracks />
          <Side $pad={3}><CompButtonIcon /></Side>
        </TrackRow>
        <PanelFooter $h={17}>
          <Spacer $w={5} />
          <SmallHillIcon />
          <ZoomSlider type="range" aria-label="时间缩放" value={zoom} onChange={(e) => setZoom(Number(e.target.value))} />
          <BigHillIcon />
          <ScrollTrack $w={134} $thumb={49} $ml={5} />
        </PanelFooter>
        <Playhead><PlayheadIcon /></Playhead>
      </TimelineRight>
    </TimelinePanel>
  )
}

/* ---------- align ---------- */

const AlignBody = styled.div`
  display: flex;
  flex-direction: column;
  padding: 4px 2px 0 7px;
  color: #8a8a8a;
`

const AlignTarget = styled.div`
  display: flex;
  align-items: center;
  white-space: nowrap;
  span {
    flex: 0 0 86px;
  }
`

const AlignRow = styled.div`
  display: flex;
  justify-content: space-between;
  padding: 0 4px 0 3px;
  margin: ${({ $top }) => $top}px 0 4px;
  color: #3c3c3c;
`

const AlignRule = styled.hr`
  width: calc(100% - 2px);
  height: 2px;
  margin: 0 0 1px;
  border: 0;
  background: #303030;
`

const IconSet = ({ items, top }) => (
  <AlignRow $top={top}>
    {items.map(([name, d]) => (
      <button key={name} aria-label={name} disabled><Icon w={18} h={18}><path d={d} /></Icon></button>
    ))}
  </AlignRow>
)

const Align = () => (
  <Panel $flex="0 0 206px">
    <TabBar $pad={0}>
      <TabClip>
        <Tab $before={-4}>跟踪器</Tab>
        <Tab $active $before={39}>对齐 <MenuIcon /></Tab>
        <Tab $before={22}>段落</Tab>
      </TabClip>
      <TabEnd><MoreIcon /></TabEnd>
    </TabBar>
    <AlignBody>
      <AlignTarget>
        <span>将图层对齐到:</span>
        <Select label="将图层对齐到" value="选区" $w={111} $size={13} $bg="#272727" $dim />
      </AlignTarget>
      <IconSet items={alignIcons} top={4} />
      <AlignRule />
      <span>分布图层:</span>
      <IconSet items={distributeIcons} top={3} />
    </AlignBody>
  </Panel>
)

/* ---------- app ---------- */

const menus = ['文件(F)', '编辑(E)', '合成(C)', '图层(L)', '效果(T)', '动画(A)', '视图(V)', '窗口', '帮助(H)']

const App = () => (
  <>
    <GlobalStyle />
    <Window>
      <MenuBar>{menus.map((m) => <button key={m}>{m}</button>)}</MenuBar>
      <Toolbar>
        <Grip />
        <ToolButton $on aria-label="选取"><ArrowIcon /></ToolButton>
        <ToolButton aria-label="手形"><HandIcon /></ToolButton>
        <ToolButton aria-label="缩放"><ZoomIcon /></ToolButton>
        <Divider />
        <ToolButton $dim aria-label="绕光标旋转"><OrbitIcon /></ToolButton>
        <ToolButton $dim aria-label="平移"><MoveIcon /></ToolButton>
        <ToolButton $dim aria-label="推拉"><DollyIcon /></ToolButton>
        <Divider />
        <ToolButton aria-label="旋转"><RotateIcon /></ToolButton>
        <ToolButton aria-label="锚点"><AnchorIcon /></ToolButton>
        <Divider />
        <ToolButton aria-label="矩形"><RectIcon /></ToolButton>
        <ToolButton aria-label="钢笔"><PenIcon /></ToolButton>
        <ToolButton aria-label="文字"><TypeGlyph $size={19}>T</TypeGlyph></ToolButton>
        <Divider />
        <ToolButton aria-label="画笔"><BrushIcon /></ToolButton>
        <ToolButton aria-label="仿制图章"><StampIcon /></ToolButton>
        <ToolButton aria-label="橡皮擦"><EraserIcon /></ToolButton>
        <Divider />
        <ToolButton aria-label="Roto 笔刷"><RotoIcon /></ToolButton>
        <Divider />
        <ToolButton aria-label="人偶位置控点"><PinIcon /></ToolButton>
        <Spacer $w={20} />
        <Divider $h={25} />
        <Spacer $w={17} />
        <ToolButton $on $dim $w={22} aria-label="本地轴"><AxesIcon /></ToolButton>
        <ToolButton $dim aria-label="世界轴"><WorldAxesIcon /></ToolButton>
        <ToolButton $dim aria-label="视图轴"><ViewAxesIcon /></ToolButton>
        <Spacer $w={2} />
        <Divider />
        <CheckLabel><input type="checkbox" />对齐</CheckLabel>
        <Spacer $w={23} />
        <ToolButton aria-label="对齐边缘"><SnapIcon /></ToolButton>
        <ToolButton $on $w={22} aria-label="对齐特征"><SnapBoxIcon /></ToolButton>
        <Spacer $w={25} />
        <Divider $h={25} />
        <Spacer $w={22} />
        <button>默认</button>
        <Spacer />
        <ToolButton $w={15} aria-label="更多"><MoreIcon /></ToolButton>
        <Spacer $w={5} />
        <Divider $h={25} />
        <SearchBox $w={194}><SearchIcon /><input placeholder="搜索帮助" aria-label="搜索帮助" /></SearchBox>
      </Toolbar>
      <Workspace>
        <Project />
        <Composition />
        <Scripts />
        <Column $w={159}>
          <Info />
          <Preview />
          <Character />
        </Column>
      </Workspace>
      <BottomRow>
        <Timeline />
        <Align />
      </BottomRow>
    </Window>
  </>
)

export default App
